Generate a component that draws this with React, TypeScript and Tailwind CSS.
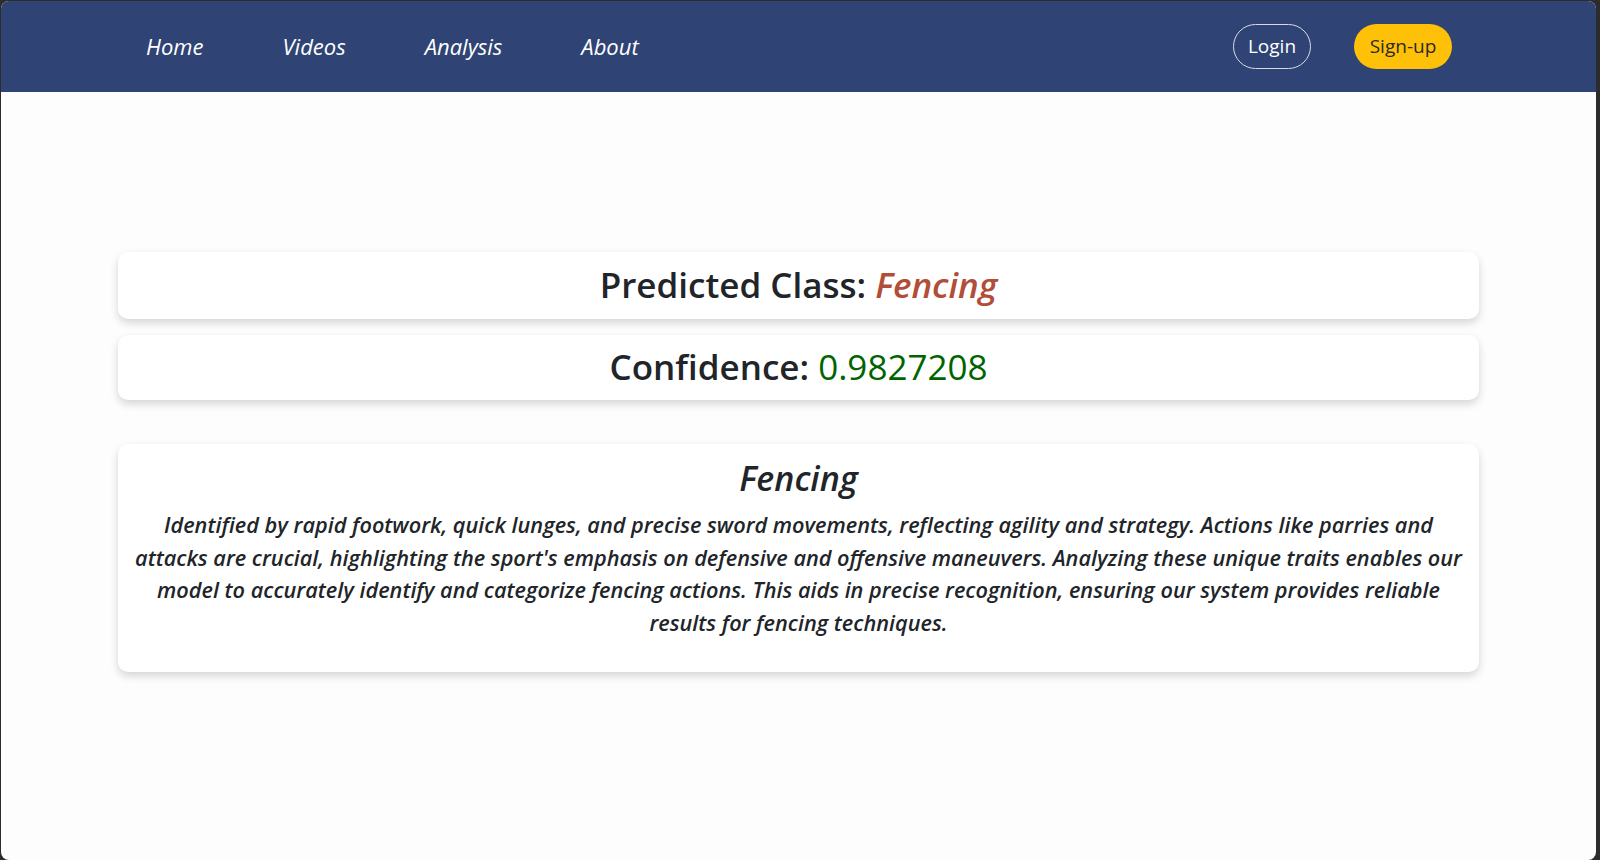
import React from "react";

const links = ["Home", "Videos", "Analysis", "About"];

function Navbar() {
  return (
    <nav className="flex h-[91px] shrink-0 items-center bg-[#2f4374] pl-[145px] pr-[144px]">
      <ul className="flex items-center gap-[79px]">
        {links.map((l) => (
          <li key={l} className="text-[22px] italic text-white">
            {l}
          </li>
        ))}
      </ul>
      <div className="ml-auto flex items-center gap-[43px]">
        <button className="h-[45px] w-[78px] rounded-full border border-[#d6dbe6] text-[19px] text-white">
          Login
        </button>
        <button className="h-[45px] w-[98px] rounded-full bg-[#ffc107] text-[19px] text-[#2a2a2a]">
          Sign-up
        </button>
      </div>
    </nav>
  );
}

export default function App() {
  return (
    <div
      className="h-[860px] w-[1600px] overflow-hidden bg-[#2c2c2c] pl-px pr-[4px] pt-px"
      style={{ fontFamily: '"Open Sans", "Noto Sans", sans-serif' }}
    >
      <div className="flex h-full flex-col overflow-hidden rounded-[8px] bg-[#fdfdfd]">
        <Navbar />
        <main className="flex flex-col items-center pt-[160px] text-[#212529]">
          {/* prediction result */}
          <div className="flex h-[67px] w-[1361px] items-center justify-center rounded-[10px] bg-white shadow-[0_4px_8px_rgba(0,0,0,0.16)]">
            <h1 className="text-[35px] font-semibold">
              Predicted Class:{" "}
              <span className="italic text-[#b24d38]">Fencing</span>
            </h1>
          </div>
          <div className="mt-[16px] flex h-[65px] w-[1361px] items-center justify-center rounded-[10px] bg-white shadow-[0_4px_8px_rgba(0,0,0,0.16)]">
            <h2 className="text-[35px] font-semibold">
              Confidence: <span className="font-medium text-[#006400]">0.9827208</span>
            </h2>
          </div>

          {/* class description */}
          <div className="mt-[44px] w-[1361px] rounded-[10px] bg-white px-[12px] pb-[33px] pt-[14px] text-center shadow-[0_4px_8px_rgba(0,0,0,0.16)]">
            <h3 className="text-[34px] font-semibold italic leading-[40px]">Fencing</h3>
            <p className="mt-[11px] text-[21.7px] font-semibold italic leading-[32.5px]">
              Identified by rapid footwork, quick lunges, and precise sword movements, reflecting agility and strategy. Actions like parries and
              <br />
              attacks are crucial, highlighting the sport's emphasis on defensive and offensive maneuvers. Analyzing these unique traits enables our
              <br />
              model to accurately identify and categorize fencing actions. This aids in precise recognition, ensuring our system provides reliable
              <br />
              results for fencing techniques.
            </p>
          </div>
        </main>
      </div>
    </div>
  );
}
